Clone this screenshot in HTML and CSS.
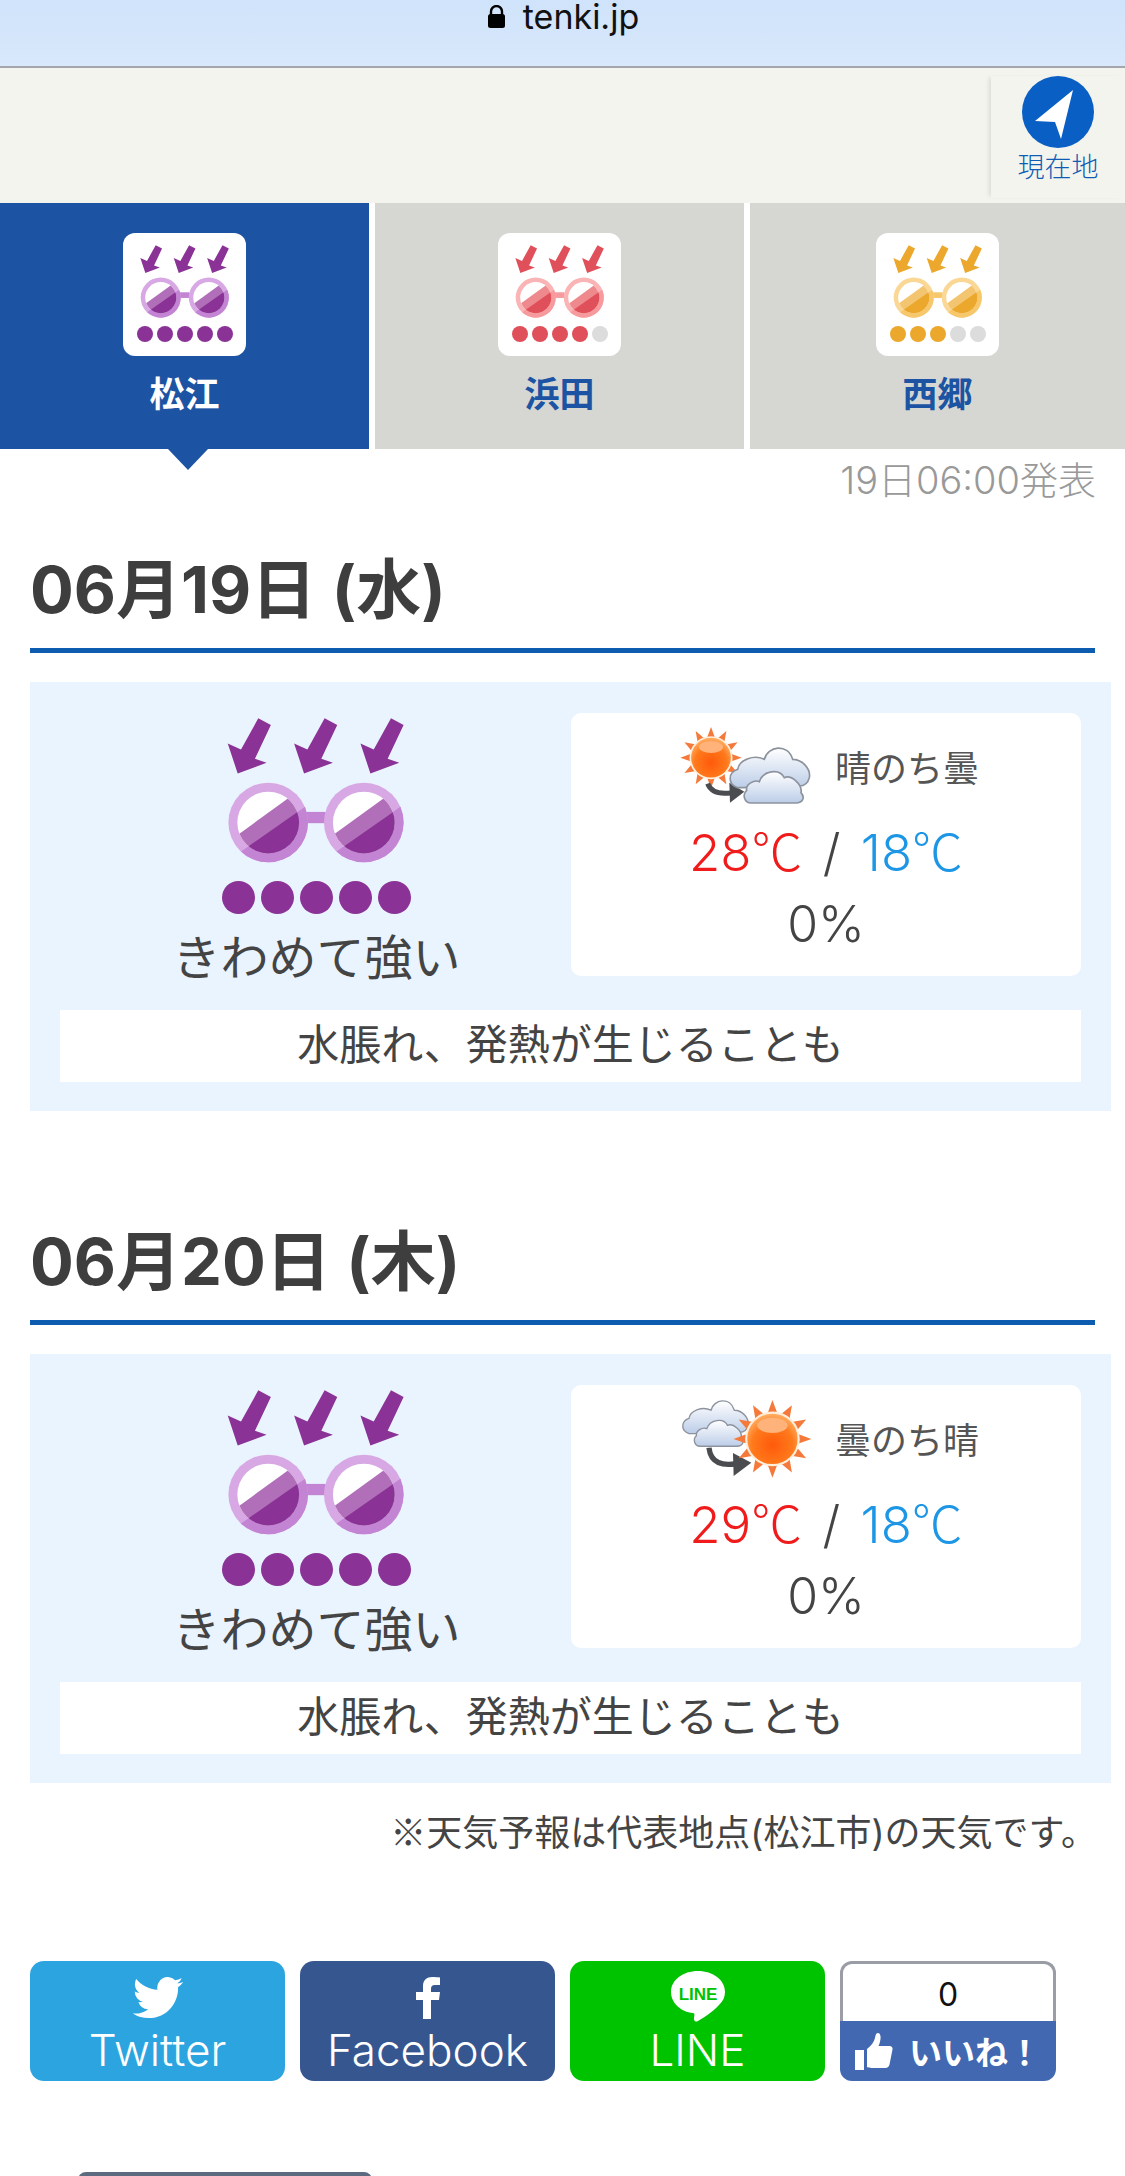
FILE: index.html
```html
<!DOCTYPE html>
<html lang="ja">

<head>
    <meta charset="utf-8">
    <title>tenki.jp</title>
    <link rel="stylesheet" href="styles.css">
</head>

<body>
    <svg class="defs" aria-hidden="true">
        <defs>
            <clipPath id="outerClip"><circle cx="237" cy="370" r="120"></circle></clipPath>
            <clipPath id="lensClip"><circle cx="237" cy="370" r="93"></circle></clipPath>
            <radialGradient id="sunFill" cx="50%" cy="62%" r="60%">
                <stop offset="0" stop-color="#ff5a0a"></stop>
                <stop offset="0.65" stop-color="#ff7a1c"></stop>
                <stop offset="1" stop-color="#ffb066"></stop>
            </radialGradient>
            <linearGradient id="cloudFill" x1="0" y1="0" x2="0" y2="1">
                <stop offset="0" stop-color="#ffffff"></stop>
                <stop offset="1" stop-color="#bccde8"></stop>
            </linearGradient>
            <g id="lens">
                <circle cx="237" cy="370" r="120" class="ring"></circle>
                <polygon points="100,496 380,300 380,500 100,500" class="ring-low" clip-path="url(#outerClip)"></polygon>
                <g clip-path="url(#lensClip)">
                    <rect x="130" y="260" width="220" height="220" fill="#fff"></rect>
                    <polygon points="100,440 380,237 380,500 100,500" class="band"></polygon>
                    <polygon points="100,496 380,300 380,500 100,500" class="main"></polygon>
                </g>
            </g>
            <polygon id="arrow" class="main" points="207,56 245,76 197,178 232,190 145,222 115,132 155,150"></polygon>
            <symbol id="glasses" viewBox="95 55 575 437">
                <use href="#arrow"></use>
                <use href="#arrow" x="200"></use>
                <use href="#arrow" x="400"></use>
                <rect x="350" y="338" width="60" height="34" class="ring-low"></rect>
                <use href="#lens"></use>
                <use href="#lens" x="288"></use>
            </symbol>
            <g id="sun">
                <g fill="#f4793a">
                    <polygon id="ray" points="-11,-62 11,-62 0,-92"></polygon>
                    <use href="#ray" transform="rotate(30)"></use>
                    <use href="#ray" transform="rotate(60)"></use>
                    <use href="#ray" transform="rotate(90)"></use>
                    <use href="#ray" transform="rotate(120)"></use>
                    <use href="#ray" transform="rotate(150)"></use>
                    <use href="#ray" transform="rotate(180)"></use>
                    <use href="#ray" transform="rotate(210)"></use>
                    <use href="#ray" transform="rotate(240)"></use>
                    <use href="#ray" transform="rotate(270)"></use>
                    <use href="#ray" transform="rotate(300)"></use>
                    <use href="#ray" transform="rotate(330)"></use>
                </g>
                <circle r="62" fill="url(#sunFill)" stroke="#ffeeda" stroke-width="5"></circle>
                <ellipse cy="-32" rx="36" ry="18" fill="#ffb27a"></ellipse>
            </g>
            <g id="clouds" fill="url(#cloudFill)" stroke="#8d939e" stroke-width="5">
                <path d="M235 250C205 240 205 205 235 195C240 165 285 150 315 165C325 125 385 115 400 165C430 165 455 195 450 220C445 240 430 245 420 245L250 250Z"></path>
                <path d="M275 296C255 296 248 270 262 258C258 240 285 225 300 232C310 200 360 190 375 220C395 210 430 240 425 265C438 280 430 296 410 296Z"></path>
            </g>
            <symbol id="sunToCloud" viewBox="60 65 400 240">
                <use href="#sun" transform="translate(155 160)"></use>
                <path d="M145 238C155 265 185 270 218 265" fill="none" stroke="#4a4c50" stroke-width="15"></path>
                <polygon points="210,235 255,262 212,295" fill="#4a4c50"></polygon>
                <use href="#clouds"></use>
            </symbol>
            <symbol id="cloudToSun" viewBox="65 55 380 225">
                <use href="#clouds" transform="translate(-90 -40) scale(0.78)"></use>
                <path d="M150 195C155 240 190 247 228 240" fill="none" stroke="#4a4c50" stroke-width="15"></path>
                <polygon points="218,210 270,238 220,275" fill="#4a4c50"></polygon>
                <use href="#sun" transform="translate(330 170) scale(1.2)"></use>
            </symbol>
        </defs>
    </svg>

    <div class="urlbar">
        <svg class="lock" viewBox="0 0 17 23">
            <path d="M3 10V6.500a5.500 5.500 0 0 1 11 0V10" fill="none" stroke="#000" stroke-width="2.400"></path>
            <rect y="9" width="17" height="14" rx="2.500"></rect>
        </svg>
        <span>tenki.jp</span>
    </div>

    <header class="header">
        <a class="locate">
            <svg class="locate-icon" viewBox="0 0 72 72">
                <circle cx="36" cy="36" r="36" fill="#0a5fc4"></circle>
                <polygon points="51,14 13,45 33,46 39,63" fill="#fff"></polygon>
            </svg>
            <span class="locate-label">現在地</span>
        </a>
    </header>

    <nav class="tabs">
        <a class="tab active">
            <span class="tab-icon level-5">
                <svg class="glasses-sm"><use href="#glasses"></use></svg>
                <span class="dots dots-sm"><i></i><i></i><i></i><i></i><i></i></span>
            </span>
            <b>松江</b>
        </a>
        <a class="tab">
            <span class="tab-icon level-4">
                <svg class="glasses-sm"><use href="#glasses"></use></svg>
                <span class="dots dots-sm"><i></i><i></i><i></i><i></i><i class="off"></i></span>
            </span>
            <b>浜田</b>
        </a>
        <a class="tab">
            <span class="tab-icon level-3">
                <svg class="glasses-sm"><use href="#glasses"></use></svg>
                <span class="dots dots-sm"><i></i><i></i><i></i><i class="off"></i><i class="off"></i></span>
            </span>
            <b>西郷</b>
        </a>
    </nav>

    <p class="issued">19日06:00発表</p>

    <section class="day">
        <h2>06月19日 (水)</h2>
        <div class="panel">
            <div class="panel-top">
                <div class="index level-5">
                    <svg class="glasses-lg"><use href="#glasses"></use></svg>
                    <span class="dots"><i></i><i></i><i></i><i></i><i></i></span>
                    <p class="index-label">きわめて強い</p>
                </div>
                <div class="weather">
                    <div class="weather-head">
                        <svg class="weather-icon"><use href="#sunToCloud"></use></svg>
                        <span>晴のち曇</span>
                    </div>
                    <p class="temps"><span class="high">28<span class="deg">℃</span></span> / <span class="low">18<span class="deg">℃</span></span></p>
                    <p class="rain">0%</p>
                </div>
            </div>
            <p class="message">水脹れ、発熱が生じることも</p>
        </div>
    </section>

    <section class="day day-second">
        <h2>06月20日 (木)</h2>
        <div class="panel">
            <div class="panel-top">
                <div class="index level-5">
                    <svg class="glasses-lg"><use href="#glasses"></use></svg>
                    <span class="dots"><i></i><i></i><i></i><i></i><i></i></span>
                    <p class="index-label">きわめて強い</p>
                </div>
                <div class="weather">
                    <div class="weather-head">
                        <svg class="weather-icon"><use href="#cloudToSun"></use></svg>
                        <span>曇のち晴</span>
                    </div>
                    <p class="temps"><span class="high">29<span class="deg">℃</span></span> / <span class="low">18<span class="deg">℃</span></span></p>
                    <p class="rain">0%</p>
                </div>
            </div>
            <p class="message">水脹れ、発熱が生じることも</p>
        </div>
    </section>

    <p class="note"><span class="note-mark">※</span>天気予報は代表地点(松江市)の天気です。</p>

    <div class="share">
        <a class="share-btn twitter">
            <svg class="share-icon" viewBox="0 2.200 24 20" fill="#fff">
                <path d="M23.953 4.570a10 10 0 0 1-2.825.775 4.958 4.958 0 0 0 2.163-2.723c-.951.555-2.005.959-3.127 1.184a4.920 4.920 0 0 0-8.384 4.482C7.690 8.095 4.067 6.130 1.640 3.162a4.822 4.822 0 0 0-.666 2.475c0 1.710.870 3.213 2.188 4.096a4.904 4.904 0 0 1-2.228-.616v.060a4.923 4.923 0 0 0 3.946 4.827 4.996 4.996 0 0 1-2.212.085 4.936 4.936 0 0 0 4.604 3.417 9.867 9.867 0 0 1-6.102 2.105c-.390 0-.779-.023-1.170-.067a13.995 13.995 0 0 0 7.557 2.209c9.053 0 13.998-7.496 13.998-13.985 0-.210 0-.420-.015-.630A9.935 9.935 0 0 0 24 4.590z"></path>
            </svg>
            <span>Twitter</span>
        </a>
        <a class="share-btn facebook">
            <svg class="share-icon" viewBox="0 0 24 42" fill="#fff">
                <path d="M7 42V23H0v-8h7V9c0-6 4-9 9-9 3 0 6 .300 8 .500V8h-5c-3 0-4 1.500-4 4v3h9l-1 8h-8v19z"></path>
            </svg>
            <span>Facebook</span>
        </a>
        <a class="share-btn line">
            <svg class="share-icon" viewBox="0 0 54 52">
                <path d="M27 0C12 0 0 9 0 21c0 11 10 20 22 21 2 .500 1.500 2 1 5-.200 1.500.500 5 4 3 5-3 15-9 21-16 4-4 6-8 6-13C54 9 42 0 27 0z" fill="#fff"></path>
                <text x="27" y="29" text-anchor="middle" class="line-mark">LINE</text>
            </svg>
            <span>LINE</span>
        </a>
        <a class="like">
            <span class="like-count">0</span>
            <span class="like-btn">
                <svg class="thumb" viewBox="0 0 38 37" fill="#fff">
                    <rect y="17" width="9" height="20"></rect>
                    <path d="M12 34V16c4-3 7-7 8-11 .500-3 1-5 3-5s3 3 2.500 6c-.500 3-1 5-2 7h11c2 0 3.500 1.500 3 3.500l-3 15c-.500 2-2 3.500-4 3.500H17c-2 0-5-1-5-1z"></path>
                </svg>
                <b>いいね！</b>
            </span>
        </a>
    </div>

    <div class="next-image"></div>
</body>

</html>
```

FILE: styles.css
```css
html, body {
    margin: 0;
    padding: 0;
}

body {
    height: 2176px;
    overflow: hidden;
    background: #fff;
    color: #444;
    font-family: Inter, "Noto Sans CJK JP", "Noto Sans", sans-serif;
}

p, h2 {
    margin: 0;
}

.defs {
    display: block;
    width: 0;
    height: 0;
}

/* browser bar */
.urlbar {
    height: 66px;
    border-bottom: 2px solid #a4a6ab;
    background: linear-gradient(#cfe3fa, #d9e8fb);
    display: flex;
    justify-content: center;
    align-items: flex-start;
    gap: 18px;
    color: #111;
    font-size: 34px;
    line-height: 34px;
    padding-left: 2px;
}

.lock {
    width: 17px;
    height: 23px;
    margin-top: 5px;
}

/* header */
.header {
    height: 135px;
    background: #f4f4ee;
    display: flex;
    justify-content: flex-end;
}

.locate {
    width: 134px;
    margin-top: 8px;
    height: 122px;
    box-shadow: -4px 0 4px -2px #dcdcd8;
    display: flex;
    flex-direction: column;
    align-items: center;
    color: #0f5cb5;
    font-size: 27px;
    line-height: 34px;
    box-sizing: border-box;
}

.locate-icon {
    width: 72px;
    height: 72px;
    flex: none;
}

.locate-label {
    margin-top: 3px;
    font-weight: 300;
}

/* tabs */
.tabs {
    display: grid;
    grid-template-columns: 369px 369px 1fr;
    gap: 6px;
    height: 246px;
}

.tab {
    background: #d6d7d2;
    color: #1c54a3;
    display: flex;
    flex-direction: column;
    align-items: center;
    padding-top: 30px;
    position: relative;
    font-size: 35px;
    line-height: 50px;
}

.tab b {
    margin-top: 13px;
}

.tab.active {
    background: #1c54a3;
    color: #fff;
}

.tab.active::after {
    content: "";
    position: absolute;
    left: 168px;
    top: 100%;
    border-left: 20px solid transparent;
    border-right: 20px solid transparent;
    border-top: 21px solid #1c54a3;
}

.tab-icon {
    width: 123px;
    height: 123px;
    background: #fff;
    border-radius: 12px;
    display: flex;
    flex-direction: column;
    align-items: center;
    padding-top: 12px;
    box-sizing: border-box;
}

.glasses-sm {
    width: 96px;
    height: 73px;
    display: block;
}

.glasses-lg {
    width: 191px;
    height: 145px;
    display: block;
}

/* levels */
.level-5 {
    --main: #8a3296;
    --band: #b06fb8;
    --ring: #d8a8e4;
    --ring-low: #c384d4;
}

.level-4 {
    --main: #e0505a;
    --band: #ee8a8e;
    --ring: #fbb4b6;
    --ring-low: #f79a9e;
}

.level-3 {
    --main: #eba82c;
    --band: #f3c570;
    --ring: #fad794;
    --ring-low: #f7c76c;
}

.main {
    fill: var(--main);
}

.band {
    fill: var(--band);
}

.ring {
    fill: var(--ring);
}

.ring-low {
    fill: var(--ring-low);
}

.dots {
    display: flex;
    gap: 6px;
    margin-top: 18px;
}

.dots i {
    width: 33px;
    height: 33px;
    border-radius: 50%;
    background: var(--main);
}

.dots-sm {
    gap: 4px;
    margin-top: 8px;
}

.dots-sm i {
    width: 16px;
    height: 16px;
}

.dots i.off {
    background: #dcdcdc;
}

/* days */
.issued {
    margin-top: 8px;
    text-align: right;
    padding-right: 29px;
    color: #999;
    font-size: 38px;
    line-height: 46px;
    font-weight: 300;
}

.day {
    margin: 49px 14px 0 30px;
}

.day-second {
    margin-top: 113px;
}

h2 {
    width: 1065px;
    height: 96px;
    border-bottom: 5px solid #0d5cb0;
    box-sizing: content-box;
    font-size: 65px;
    line-height: 76px;
    font-weight: 700;
    color: #3e3e3e;
}

.panel {
    margin-top: 29px;
    background: #eaf4ff;
    padding: 31px 30px 29px;
}

.panel-top {
    display: grid;
    grid-template-columns: 1fr 510px;
}

.index {
    display: flex;
    flex-direction: column;
    align-items: center;
    padding: 5px 0 0 2px;
}

.index-label {
    margin-top: 26px;
    font-size: 48px;
    line-height: 36px;
    font-weight: 400;
}

.weather {
    height: 263px;
    background: #fff;
    border-radius: 10px;
    text-align: center;
}

.weather-head {
    display: flex;
    justify-content: center;
    align-items: center;
    gap: 22px;
    height: 104px;
    padding-top: 2px;
    box-sizing: border-box;
    font-size: 36px;
    padding-left: 6px;
    color: #555;
}

.weather-icon {
    width: 134px;
    height: 80px;
}

.temps {
    font-size: 51px;
    line-height: 64px;
    font-weight: 300;
    word-spacing: 6px;
}

.deg {
    font-family: "Noto Sans CJK JP", sans-serif;
}

.high {
    color: #f01c1c;
}

.low {
    color: #1e96e6;
}

.rain {
    font-size: 50px;
    line-height: 78px;
    font-weight: 300;
}

.message {
    margin-top: 34px;
    height: 72px;
    background: #fff;
    text-align: center;
    font-size: 42px;
    line-height: 70px;
    font-weight: 400;
}

.note {
    margin-top: 23px;
    padding-right: 28px;
    text-align: right;
    font-size: 36px;
    line-height: 48px;
    font-weight: 400;
}

.note-mark {
    font-family: "Noto Sans CJK JP", sans-serif;
}

/* share row */
.share {
    margin: 104px 0 0 30px;
    display: flex;
    gap: 15px;
    height: 120px;
}

.share-btn {
    width: 255px;
    height: 120px;
    border-radius: 14px;
    color: #fff;
    display: flex;
    flex-direction: column;
    align-items: center;
    font-size: 44px;
    line-height: 52px;
    font-weight: 300;
    padding-top: 16px;
    box-sizing: border-box;
}

.share-icon {
    height: 42px;
    width: 52px;
    flex: none;
    margin-bottom: 5px;
}

.twitter {
    background: #2ca4e0;
}

.facebook {
    background: #365690;
}

.line {
    background: #00c300;
    padding-top: 10px;
}

.line .share-icon {
    height: 52px;
    width: 54px;
    margin-bottom: 1px;
}

.line-mark {
    fill: #00c300;
    font-family: "Liberation Sans", sans-serif;
    font-weight: 700;
    font-size: 17px;
}

.like {
    width: 216px;
    height: 120px;
    display: flex;
    flex-direction: column;
}

.like-count {
    height: 60px;
    border: 3px solid #9a9ca6;
    border-bottom: 0;
    border-radius: 12px 12px 0 0;
    box-sizing: border-box;
    text-align: center;
    color: #111;
    font-size: 32px;
    line-height: 62px;
}

.like-btn {
    height: 60px;
    background: #4268b1;
    border-radius: 0 0 12px 12px;
    color: #fff;
    display: flex;
    align-items: center;
    gap: 16px;
    padding-left: 15px;
    font-size: 33px;
}

.thumb {
    width: 38px;
    height: 37px;
    flex: none;
}

.next-image {
    width: 294px;
    height: 20px;
    margin: 91px 0 0 78px;
    background: #5d6b80;
    border-radius: 8px 8px 0 0;
}
```
